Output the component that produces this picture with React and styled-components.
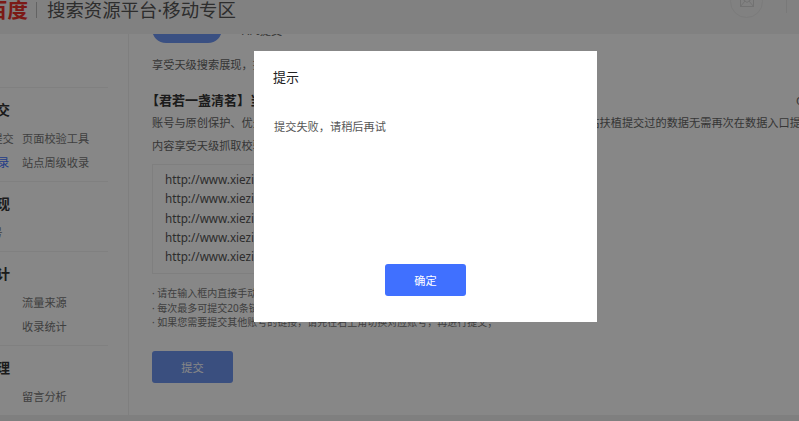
import styled, { createGlobalStyle } from 'styled-components';

const GlobalStyle = createGlobalStyle`
  html, body {
    margin: 0;
    padding: 0;
    background: #f0f0f0;
  }
  body {
    font-family: "Noto Sans", "Noto Sans CJK SC", sans-serif;
    color: #333;
  }
`;

const Viewport = styled.div`
  position: relative;
  width: 799px;
  height: 421px;
  overflow: hidden;
  background: #f0f0f0;
`;

const Page = styled.div`
  width: 920px;
  margin-left: -60px;
`;

const Header = styled.header`
  position: relative;
  z-index: 1;
  display: flex;
  align-items: flex-start;
  height: 34px;
  background: #f3f3f3;
  overflow: hidden;
`;

const Logo = styled.span`
  margin: 0 0 0 47px;
  font-size: 20.5px;
  line-height: 20px;
  font-weight: 700;
  color: #e8312a;
`;

const LogoDivider = styled.span`
  width: 1px;
  height: 16px;
  margin: 2px 10px 0 8px;
  background: #bbb;
`;

const SiteTitle = styled.h1`
  margin: 0;
  font-size: 18.4px;
  line-height: 20px;
  font-weight: 400;
  color: #555;
`;

const Actions = styled.div`
  display: flex;
  align-items: flex-start;
  margin-left: auto;
  margin-right: 73px;
`;

const MailButton = styled.div`
  display: flex;
  align-items: flex-end;
  justify-content: center;
  box-sizing: border-box;
  width: 33px;
  height: 33px;
  margin-top: -15px;
  padding-bottom: 10px;
  border: 1px solid #e8e8e8;
  border-radius: 50%;
`;

const ActionDivider = styled.span`
  width: 1px;
  height: 13px;
  margin-left: 23px;
  background: #e4e4e4;
`;

const Body = styled.div`
  display: flex;
  height: 381px;
  background: #fff;
  border-radius: 4px;
`;

const Sidebar = styled.aside`
  flex: 0 0 189px;
  box-sizing: border-box;
  border-right: 1px solid #f0f0f0;
`;

const SideTop = styled.div`
  height: 53px;
  margin-right: 20px;
  border-bottom: 1px solid #f2f2f2;
`;

const SideGroup = styled.section`
  margin-right: 20px;
  padding: 13px 0 6px 16px;
  border-bottom: ${(props) => (props.$last ? 'none' : '1px solid #f2f2f2')};
`;

const SideTitle = styled.h3`
  margin: 0 0 8px;
  font-size: 13.5px;
  line-height: 18px;
  font-weight: 600;
  color: #333;
`;

const SideRow = styled.div`
  display: grid;
  grid-template-columns: 53px auto;
  height: 24px;
  padding-left: 13px;
  font-size: 11.2px;
  line-height: 24px;
  white-space: nowrap;
  color: #777;
`;

const SideLink = styled.span`
  color: ${(props) => (props.$active ? '#4070ff' : 'inherit')};
`;

const Content = styled.main`
  flex: 1;
  padding-left: 23px;
  min-width: 0;
`;

const Tabs = styled.div`
  display: flex;
  align-items: center;
  gap: 20px;
  height: 28px;
  margin-top: -19px;
`;

const ActiveTab = styled.div`
  width: 70px;
  height: 28px;
  border-radius: 14px;
  background: #6f97f5;
  color: #fff;
  font-size: 11.2px;
  line-height: 28px;
  text-align: center;
`;

const Tab = styled.div`
  padding-top: 2px;
  font-size: 11.2px;
  color: #666;
`;

const Text = styled.p`
  margin: ${(props) => props.$margin || '0'};
  font-size: 11.2px;
  line-height: 20px;
  white-space: nowrap;
  color: #666;
`;

const Heading = styled.div`
  display: flex;
  justify-content: space-between;
  width: 657px;
  margin: 15px 0 0 -6px;
  font-size: 13px;
  line-height: 20px;
  font-weight: 600;
  color: #333;
`;

const Hint = styled.span`
  padding-top: 1px;
  font-size: 11.2px;
  font-weight: 400;
  color: #666;
`;

const UrlBox = styled.div`
  box-sizing: border-box;
  width: 340px;
  height: 110px;
  margin-top: 8px;
  padding: 5px 12px;
  border: 1px solid #f0f0f0;
  font-size: 11.7px;
  line-height: 19.3px;
  color: #555;
`;

const Notes = styled.ul`
  margin: 12px 0 0;
  padding: 0;
  list-style: none;
`;

const Note = styled.li`
  font-size: 10px;
  line-height: 14.6px;
  white-space: nowrap;
  color: #777;
`;

const SubmitButton = styled.button`
  display: block;
  box-sizing: border-box;
  width: 81px;
  height: 32px;
  margin-top: 21px;
  border: 0;
  border-radius: 3px;
  background: #6e95f0;
  color: #fff;
  font: inherit;
  font-size: 11.2px;
`;

const Overlay = styled.div`
  position: absolute;
  inset: 0;
  z-index: 2;
  background: rgba(0, 0, 0, 0.47);
`;

const Dialog = styled.div`
  position: absolute;
  left: 254px;
  top: 51px;
  display: flex;
  flex-direction: column;
  box-sizing: border-box;
  width: 343px;
  height: 271px;
  padding: 16px 19px 26px;
  background: #fff;
`;

const DialogTitle = styled.h2`
  margin: 0;
  font-size: 13px;
  line-height: 20px;
  font-weight: 400;
  color: #222;
`;

const DialogText = styled.p`
  margin: 30px 0 0 1px;
  font-size: 11.2px;
  line-height: 20px;
  color: #555;
`;

const ConfirmButton = styled.button`
  align-self: center;
  width: 81px;
  height: 32px;
  margin-top: auto;
  border: 0;
  border-radius: 3px;
  background: #4070ff;
  color: #fff;
  font: inherit;
  font-size: 11.2px;
`;

const urls = Array.from({ length: 5 }, () => 'http://www.xiezixiansheng.com/');

export default function App() {
  return (
    <Viewport>
      <GlobalStyle />
      <Page>
        <Header>
          <Logo>百度</Logo>
          <LogoDivider />
          <SiteTitle>搜索资源平台·移动专区</SiteTitle>
          <Actions>
            <MailButton>
              <svg width="14" height="10" viewBox="0 0 14 10" fill="none" stroke="#d8d8d8">
                <rect x="0.5" y="0.5" width="13" height="9" />
                <path d="M0.5 0.5L7 5.5L13.5 0.5M0.5 9.5L5 4M13.5 9.5L9 4" />
              </svg>
            </MailButton>
            <ActionDivider />
          </Actions>
        </Header>
        <Body>
          <Sidebar>
            <SideTop />
            <SideGroup>
              <SideTitle>资源提交</SideTitle>
              <SideRow>
                <SideLink>普通提交</SideLink>
                <SideLink>页面校验工具</SideLink>
              </SideRow>
              <SideRow>
                <SideLink $active>API收录</SideLink>
                <SideLink>站点周级收录</SideLink>
              </SideRow>
            </SideGroup>
            <SideGroup>
              <SideTitle>搜索展现</SideTitle>
              <SideRow>
                <SideLink>熊掌号</SideLink>
              </SideRow>
            </SideGroup>
            <SideGroup>
              <SideTitle>数据统计</SideTitle>
              <SideRow>
                <SideLink />
                <SideLink>流量来源</SideLink>
              </SideRow>
              <SideRow>
                <SideLink />
                <SideLink>收录统计</SideLink>
              </SideRow>
            </SideGroup>
            <SideGroup $last>
              <SideTitle>互动管理</SideTitle>
              <SideRow>
                <SideLink />
                <SideLink>留言分析</SideLink>
              </SideRow>
            </SideGroup>
          </Sidebar>
          <Content>
            <Tabs>
              <ActiveTab>天级收录</ActiveTab>
              <Tab>API提交</Tab>
            </Tabs>
            <Text $margin="12px 0 0">享受天级搜索展现，提升移动流量</Text>
            <Heading>
              <span>【君若一盏清茗】当前账号的提交</span>
              <Hint>C</Hint>
            </Heading>
            <Text $margin="2px 0 0">
              账号与原创保护、优先抓取索引等权益，通过本接口提交的内容享受优先展现机会，对本站扶植提交过的数据无需再次在数据入口提交
            </Text>
            <Text $margin="3px 0 0">内容享受天级抓取校验，请及时提交</Text>
            <UrlBox>
              {urls.map((url, i) => (
                <div key={i}>{url}</div>
              ))}
            </UrlBox>
            <Notes>
              <Note>· 请在输入框内直接手动输入链接</Note>
              <Note>· 每次最多可提交20条链接</Note>
              <Note>· 如果您需要提交其他账号的链接，请先在右上角切换对应账号，再进行提交；</Note>
            </Notes>
            <SubmitButton>提交</SubmitButton>
          </Content>
        </Body>
      </Page>
      <Overlay>
        <Dialog>
          <DialogTitle>提示</DialogTitle>
          <DialogText>提交失败，请稍后再试</DialogText>
          <ConfirmButton>确定</ConfirmButton>
        </Dialog>
      </Overlay>
    </Viewport>
  );
}
